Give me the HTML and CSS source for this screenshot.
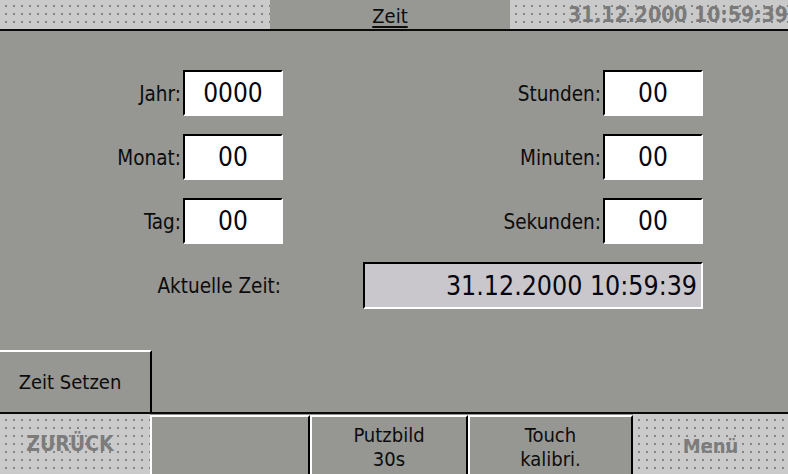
FILE: index.html
```html
<!DOCTYPE html>
<html lang="de">
<head>
<meta charset="utf-8">
<title>Zeit</title>
<link rel="stylesheet" href="styles.css">
</head>
<body>
<div class="screen">
  <header class="topbar">
    <div class="dots tb-left"></div>
    <div class="tab"><span class="tab-title">Zeit</span></div>
    <div class="dots tb-right"><span class="clock">31.12.2000 10:59:39</span></div>
  </header>
  <main class="content">
    <div class="form">
      <div class="label">Jahr:</div><div class="field">0000</div>
      <div class="label">Stunden:</div><div class="field">00</div>
      <div class="label">Monat:</div><div class="field">00</div>
      <div class="label">Minuten:</div><div class="field">00</div>
      <div class="label">Tag:</div><div class="field">00</div>
      <div class="label">Sekunden:</div><div class="field">00</div>
      <div class="label span2">Aktuelle Zeit:</div><div class="display">31.12.2000 10:59:39</div>
    </div>
    <div class="btn setzen">Zeit Setzen</div>
  </main>
  <footer class="bottombar">
    <div class="dots fb fb-back"><span class="disabled back-label">ZURÜCK</span></div>
    <div class="btn fb fb-empty"></div>
    <div class="btn fb fb-putz">Putzbild<br>30s</div>
    <div class="btn fb fb-touch">Touch<br>kalibri.</div>
    <div class="dots fb fb-menu"><span class="disabled">Menü</span></div>
  </footer>
</div>
</body>
</html>
```

FILE: styles.css
```css
html, body {
  margin: 0;
  padding: 0;
  background: #969692;
}
.screen {
  width: 788px;
  height: 474px;
  overflow: hidden;
  display: flex;
  flex-direction: column;
  background: #969692;
  font-family: "DejaVu Sans Condensed", "DejaVu Sans", sans-serif;
  font-stretch: condensed;
  color: #0c0c0c;
}
.dots {
  background-color: #cacaca;
  background-image: radial-gradient(circle, #1e1e1e 0.5px, rgba(0,0,0,0) 0.85px);
  background-size: 8px 8px;
  background-position: 2px 2px;
}
.topbar {
  height: 29px;
  border-bottom: 2px solid #0a0a0a;
  display: flex;
  flex: none;
}
.tb-left {
  width: 270px;
}
.tab {
  width: 240px;
  background: #979793;
  display: flex;
  align-items: center;
  justify-content: center;
}
.tab-title {
  font-size: 20px;
  text-decoration: underline;
  text-underline-offset: 3px;
  margin-top: 2px;
}
.tb-right {
  flex: 1;
  display: flex;
  align-items: center;
  justify-content: flex-end;
  overflow: hidden;
}
.clock {
  font-size: 21px;
  font-weight: bold;
  color: #7a7a7a;
  white-space: nowrap;
  margin-top: 1px;
}
.content {
  flex: 1;
  display: flex;
  flex-direction: column;
}
.form {
  margin-top: 39px;
  display: grid;
  grid-template-columns: 181px 100px 316px 100px;
  grid-auto-rows: 46px;
  column-gap: 2px;
  row-gap: 18px;
}
.label {
  font-size: 20.5px;
  display: flex;
  align-items: center;
  justify-content: flex-end;
  white-space: nowrap;
  padding-top: 2px;
}
.span2 {
  grid-column: 1 / 3;
  padding-right: 2px;
}
.field {
  box-sizing: border-box;
  background: #ffffff;
  border-top: 2px solid #000;
  border-left: 2px solid #000;
  border-right: 2px solid #fff;
  border-bottom: 2px solid #fff;
  font-size: 26px;
  display: flex;
  align-items: center;
  justify-content: center;
  color: #050510;
}
.display {
  grid-column: 3 / 5;
  justify-self: end;
  width: 340px;
  height: 47px;
  box-sizing: border-box;
  background: #c9c7cb;
  border-top: 2px solid #000;
  border-left: 2px solid #000;
  border-right: 2px solid #fff;
  border-bottom: 2px solid #fff;
  font-size: 26.5px;
  display: flex;
  align-items: center;
  justify-content: flex-end;
  padding-right: 4px;
  white-space: nowrap;
  color: #050510;
}
.btn {
  box-sizing: border-box;
  background: #969692;
  font-size: 20px;
  display: flex;
  align-items: center;
  justify-content: center;
  text-align: center;
}
.setzen {
  margin-top: auto;
  width: 152px;
  height: 62px;
  border-top: 2px solid #fff;
  border-right: 2px solid #000;
  padding-right: 10px;
}
.bottombar {
  height: 62px;
  box-sizing: border-box;
  border-top: 2px solid #0a0a0a;
  display: flex;
  flex: none;
}
.fb {
  height: 100%;
  box-sizing: border-box;
}
.bottombar .btn {
  border-top: 2px solid #fff;
  border-left: 2px solid #fff;
  border-right: 2px solid #000;
  margin-top: 1px;
  line-height: 24px;
  padding-top: 2px;
}
.fb-back {
  width: 150px;
  display: flex;
  align-items: center;
  justify-content: center;
  padding-right: 10px;
}
.fb-empty { width: 160px; }
.fb-putz { width: 158px; }
.fb-touch { width: 165px; }
.fb-menu {
  flex: 1;
  display: flex;
  align-items: center;
  justify-content: center;
  padding-top: 4px;
}
.disabled {
  font-size: 20px;
  font-weight: bold;
  color: #7c7c7c;
}
.back-label {
  font-size: 21px;
}
```
